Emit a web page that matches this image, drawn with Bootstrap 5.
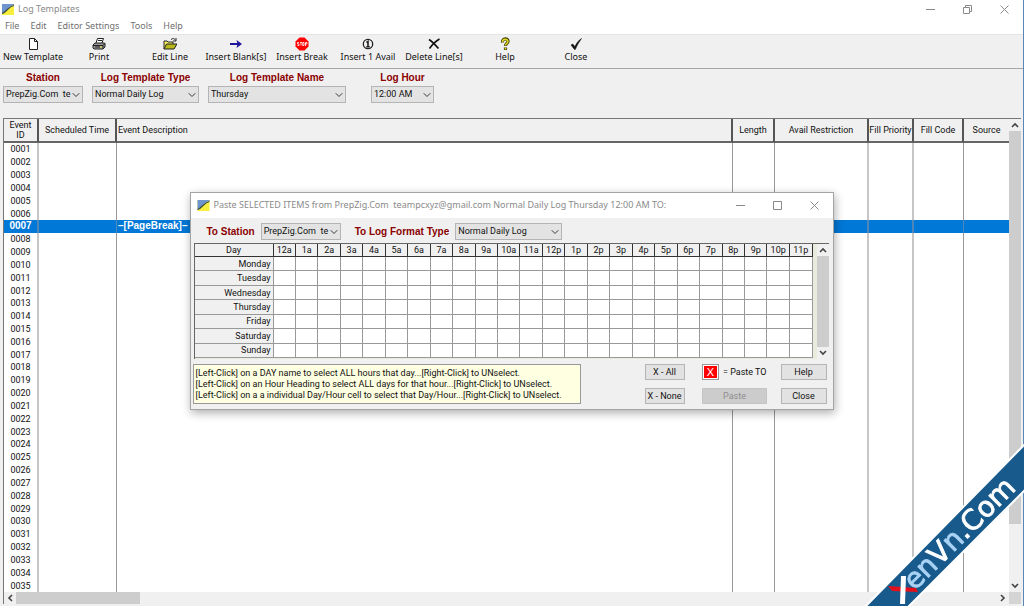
<!DOCTYPE html>
<html lang="en">
<head>
<meta charset="utf-8">
<meta name="viewport" content="width=device-width, initial-scale=1">
<title>Log Templates</title>
<link href="https://cdn.jsdelivr.net/npm/bootstrap@5.3.0/dist/css/bootstrap.min.css" rel="stylesheet">
<style>
  :root { --ui: "Noto Sans", "Open Sans", sans-serif; --cell: Roboto, "Liberation Sans", sans-serif; --face: #f0f0f0; --thumb: #cdcdcd; }
  body { font-family: var(--cell); font-size: 9px; line-height: 12px; color: #111; background: #fff; overflow: hidden; }
  button { font-family: inherit; }
  .app { height: 100vh; border-right: 1px solid #5b86b8; background: var(--face); }
  .titlebar { height: 18px; padding-left: 2px; gap: 4px; font: 9px/18px var(--ui); color: #8a8a8a; background: #fff; white-space: nowrap; }
  .appicon { flex: none; }
  .winbtn { flex: none; border: 0; background: none; padding: 0; width: 37px; display: flex; justify-content: center; align-items: center; color: #8a8a8a; }
  .menubar { height: 16px; font: 9px/16px var(--ui); background: #fff; padding-left: 5px; gap: 11px; }
  .menubar a { color: #707070; text-decoration: none; }
  .toolbar { height: 35px; gap: 5px; border-top: 1px solid #e4e4e4; border-bottom: 1px solid #a6a6a6; }
  .tool { width: 66px; border: 0; padding: 2px 0 0; background: none; font: 9px/12px var(--ui); color: #111; white-space: nowrap; display: flex; flex-direction: column; align-items: center; }
  .tool svg { width: 14px; height: 14px; flex: none; }
  .filters { height: 49px; padding: 3px; gap: 9px; }
  .caption { font: bold 10px/12px "Liberation Sans", sans-serif; color: #8b0000; white-space: nowrap; }
  .filters .caption { display: block; text-align: center; margin-bottom: 2px; }
  .combo { height: 17px; padding: 0 10px 0 2px; border: 1px solid #b4b4b4; border-radius: 0; background-color: #e3e3e3; background-position: right 2px center; background-size: 8px 8px; font: 9px/15px var(--cell); color: #111; min-height: 0; }
  .w-station { width: 80px; } .w-type { width: 107px; } .w-name { width: 138px; } .w-hour { width: 63px; }
  .w-hour-wrap { margin-left: 16px; }
  .log { border-left: 1px solid #777; border-top: 1px solid #777; margin: 0 2px 2px 3px; min-height: 0; }
  .log-main { min-width: 0; min-height: 0; background: #fff; }
  .log-rows { min-height: 0; }
  .events { width: 100%; height: 100%; table-layout: fixed; border-collapse: separate; border-spacing: 0; text-align: center; }
  .events th { height: 24px; font-weight: normal; line-height: 10px; padding: 0; background: var(--face); border-bottom: 2px solid #666; border-right: 2px solid #555; white-space: nowrap; }
  .events td { padding: 0; line-height: 12px; border-right: 1px solid #999; }
  .events td.wide { border-right: 2px solid #c6c6c6; }
  .events th:last-child, .events td:last-child { border-right: 0; }
  .events th.desc, .events td.desc { text-align: left; padding-left: 1px; }
  .events tr.picked td { background: #0078d7; color: #fff; font: bold 10px/12px "Liberation Sans", sans-serif; border-right-color: #4f86b8; }
  .vbar { width: 12px; background: var(--face); }
  .hbar { height: 12px; background: var(--face); }
  .thumb { background: var(--thumb); }
  .arrow { width: 12px; height: 12px; border: 0; padding: 0; background: none; color: #444; display: flex; align-items: center; justify-content: center; flex: none; }
  .hbar.corner { width: 12px; background: #d4d4d4; }
  .paste-win { width: 644px; top: 192px; left: 0; right: 0; margin: 0 auto; background: var(--face); border: 1px solid #a4a4a4; box-shadow: 1px 3px 9px rgba(0,0,0,.32); }
  .paste-win .titlebar { height: 25px; line-height: 24px; padding-left: 6px; }
  .targets { padding: 4px 0 2px 16px; height: 25px; gap: 6px; }
  .grid-area { height: 116px; margin: 0 4px 0 3px; border-top: 1px solid #666; border-left: 1px solid #666; background: #e9ebdc; }
  .hours { table-layout: fixed; width: 100%; height: 114px; border-collapse: separate; border-spacing: 0; background: #fff; text-align: center; }
  .hours th { font-weight: normal; padding: 0; line-height: 12px; background: var(--face); }
  .hours thead th { height: 13px; border-right: 1px solid #333; border-bottom: 1px solid #333; }
  .hours tbody th { text-align: right; padding-right: 2px; }
  .hours tbody th, .hours td { border-right: 1px solid #999; border-bottom: 1px solid #999; }
  .hint { width: 388px; height: 40px; padding: 3px 2px; line-height: 11px; background: #ffffe1; border: 1px solid #999; white-space: nowrap; }
  .dlg-foot { padding: 5px 6px 5px 2px; }
  .actions { width: 182px; }
  .push { border: 1px solid #b5b5b5; background: #e2e2e2; border-radius: 0; padding: 0; height: 16px; font: 9px/14px var(--cell); color: #111; white-space: nowrap; }
  .push:disabled { background: #cccccc; border-color: #c4c4c4; color: #8f8f8f; opacity: 1; }
  .w-mark { width: 40px; } .w-paste { width: 65px; } .w-end { width: 46px; }
  .key { width: 17px; height: 16px; background: #f00; color: #fff; border: 1px solid #999; outline: 1px solid #fff; outline-offset: -2px; font: 11px/14px "Liberation Sans", sans-serif; text-align: center; }
  .ribbon { right: 0; bottom: 0; width: 160px; height: 162px; pointer-events: none; }
</style>
</head>
<body>
<div class="app d-flex flex-column position-relative">
  <header class="titlebar d-flex">
    <svg class="appicon mt-1" width="12" height="11" viewBox="0 0 12 11"><rect width="12" height="11" fill="#f7ee3e"/><path d="M0 0h12v1C7 2 6 6 0 10z" fill="#6f95cf"/><path d="M0 9.500C5 8 6 2.500 12 1.500" fill="none" stroke="#3c4a3c" stroke-width="1.200"/></svg>
    <span class="flex-grow-1">Log Templates</span>
    <div class="d-flex">
      <button class="winbtn" aria-label="Minimize"><svg width="9" height="9"><path d="M0 4.500h9" stroke="currentColor"/></svg></button>
      <button class="winbtn" aria-label="Restore"><svg width="9" height="9" fill="none" stroke="currentColor"><path d="M.5 2.500h6v6h-6zM2.500 2.500v-2h6v6h-2"/></svg></button>
      <button class="winbtn" aria-label="Close"><svg width="9" height="9" stroke="currentColor"><path d="M.5.500l8 8M8.500.500l-8 8"/></svg></button>
    </div>
  </header>
  <nav class="menubar d-flex">
    <a href="#">File</a><a href="#">Edit</a><a href="#">Editor Settings</a><a href="#">Tools</a><a href="#">Help</a>
  </nav>
  <div class="toolbar d-flex">
    <div class="d-flex">
      <button class="tool"><svg viewBox="0 0 14 14"><path d="M3.500 1.500h5l3 3v8h-8zM8.500 1.500v3h3" fill="#fff" stroke="#222"/></svg>New Template</button>
      <button class="tool"><svg viewBox="0 0 14 14"><path d="M4 6l1.500-4.500h6L10 6" fill="#fff" stroke="#222"/><path d="M6 3.500h4" stroke="#222"/><path d="M1 8l2-2h9.500l.5 1v3l-2 2H2l-1-1z" fill="#999" stroke="#222"/><path d="M1 8.500h10v3M11 8.500l2-2M3 10h5" fill="none" stroke="#222"/><path d="M8 10h2" stroke="#f4e842"/></svg>Print</button>
    </div>
    <div class="d-flex">
      <button class="tool"><svg viewBox="0 0 14 14"><path d="M1 12V4h3l1 1h5v2" fill="#f8f06a" stroke="#222"/><path d="M1 12l2.500-5H14l-3 5z" fill="#b9b91c" stroke="#222"/><path d="M8 2.500c2-1.500 3-1 4.500.5M13 1v3h-3" fill="none" stroke="#222"/></svg>Edit Line</button>
      <button class="tool"><svg viewBox="0 0 14 14"><path d="M1 7h8" stroke="#1f169c" stroke-width="2"/><path d="M7.500 3l5.500 4-5.500 4 1-4z" fill="#1f169c"/></svg>Insert Blank[s]</button>
      <button class="tool"><svg viewBox="0 0 14 14"><path d="M4.500.500h5l4 4v5l-4 4h-5l-4-4v-5z" fill="#f00"/><path d="M4 5.500H2.500V7H4v1.500H2.500M5 5.500h2M6 5.500v3M7.700 5.500h1.300v3H7.700zM10.500 9V5.500H12V7h-1.500" fill="none" stroke="#fff" stroke-width=".8"/></svg>Insert Break</button>
      <button class="tool"><svg viewBox="0 0 14 14"><circle cx="7" cy="7" r="4.700" fill="#f0f0f0" stroke="#222" stroke-width="1.300"/><path d="M5.500 5.500L7 4.500V10M5.300 9.800h3.400" fill="none" stroke="#222" stroke-width="1.600"/></svg>Insert 1 Avail</button>
      <button class="tool"><svg viewBox="0 0 14 14"><path d="M2 2.500c3 2 6 5 9.500 9M12.500 2C8 4.500 5 8 2.500 11.500" fill="none" stroke="#111" stroke-width="1.600"/></svg>Delete Line[s]</button>
    </div>
    <button class="tool"><svg viewBox="0 0 14 14"><path d="M4.500 5.500C4 .500 10.500 1 10 4.500 9.800 6.500 7.500 6.500 7.500 9M7.500 10.500V13" fill="none" stroke="#444208" stroke-width="3.200"/><path d="M4.500 5C4.500 1.500 10 1.500 9.900 4.500 9.800 6.500 7.500 6.500 7.500 8.500M7.500 11v1.500" fill="none" stroke="#e4dd1f" stroke-width="1.500"/></svg>Help</button>
    <button class="tool"><svg viewBox="0 0 14 14"><path d="M2 8l1.700-1L6 9.500C7.500 6 9.500 3.500 12.500 1.500 10 5 8 8.500 6.300 12.500H5.500z" fill="#111" stroke="#111" stroke-width=".5"/></svg>Close</button>
  </div>
  <form class="filters d-flex">
    <div><label class="caption" for="station">Station</label><select id="station" class="form-select combo w-station"><option>PrepZig.Com&nbsp; te</option></select></div>
    <div><label class="caption" for="type">Log Template Type</label><select id="type" class="form-select combo w-type"><option>Normal Daily Log</option></select></div>
    <div><label class="caption" for="tname">Log Template Name</label><select id="tname" class="form-select combo w-name"><option>Thursday</option></select></div>
    <div class="w-hour-wrap"><label class="caption" for="hour">Log Hour</label><select id="hour" class="form-select combo w-hour"><option>12:00 AM</option></select></div>
  </form>
  <main class="log d-flex flex-grow-1">
    <div class="log-main d-flex flex-column flex-grow-1">
      <div class="log-rows flex-grow-1">
        <table class="events">
          <colgroup><col style="width:35px"><col style="width:78px"><col><col style="width:42px"><col style="width:94px"><col style="width:45px"><col style="width:50px"><col style="width:45px"></colgroup>
          <thead><tr><th>Event<br>ID</th><th>Scheduled Time</th><th class="desc">Event Description</th><th>Length</th><th>Avail Restriction</th><th>Fill Priority</th><th>Fill Code</th><th>Source</th></tr></thead>
          <tbody id="events"></tbody>
        </table>
      </div>
      <div class="hbar d-flex">
        <button class="arrow" aria-label="Scroll left"><svg width="6" height="8" fill="none" stroke="currentColor" stroke-width="1.600"><path d="M5 1L2 4l3 3"/></svg></button>
        <div class="thumb" style="width:124px"></div>
        <button class="arrow ms-auto" aria-label="Scroll right"><svg width="6" height="8" fill="none" stroke="currentColor" stroke-width="1.600"><path d="M1 1l3 3-3 3"/></svg></button>
      </div>
    </div>
    <div class="vbar d-flex flex-column">
      <button class="arrow" aria-label="Scroll up"><svg width="8" height="6" fill="none" stroke="currentColor" stroke-width="1.600"><path d="M1 5l3-3 3 3"/></svg></button>
      <div class="thumb" style="height:81%"></div>
      <button class="arrow mt-auto" aria-label="Scroll down"><svg width="8" height="6" fill="none" stroke="currentColor" stroke-width="1.600"><path d="M1 1l3 3 3-3"/></svg></button>
      <div class="hbar corner"></div>
    </div>
  </main>

  <section class="paste-win position-absolute" role="dialog" aria-labelledby="paste-title">
    <div class="titlebar d-flex">
      <svg class="appicon my-auto" width="13" height="11" viewBox="0 0 12 11"><rect width="12" height="11" fill="#f7ee3e"/><path d="M0 0h12v1C7 2 6 6 0 10z" fill="#6f95cf"/><path d="M0 9.500C5 8 6 2.500 12 1.500" fill="none" stroke="#3c4a3c" stroke-width="1.200"/></svg>
      <span id="paste-title" class="flex-grow-1">Paste SELECTED ITEMS from PrepZig.Com&nbsp; teampcxyz@gmail.com Normal Daily Log Thursday 12:00 AM TO:</span>
      <div class="d-flex">
        <button class="winbtn" aria-label="Minimize"><svg width="9" height="9"><path d="M0 4.500h9" stroke="currentColor"/></svg></button>
        <button class="winbtn" aria-label="Maximize"><svg width="9" height="9" fill="none" stroke="currentColor"><path d="M.5.500h8v8h-8z"/></svg></button>
        <button class="winbtn" aria-label="Close window"><svg width="9" height="9" stroke="currentColor"><path d="M.5.500l8 8M8.500.500l-8 8"/></svg></button>
      </div>
    </div>
    <div class="targets d-flex align-items-center">
      <label class="caption" for="to-station">To Station</label><select id="to-station" class="form-select combo w-station"><option>PrepZig.Com&nbsp; te</option></select>
      <label class="caption ms-2" for="to-type">To Log Format Type</label><select id="to-type" class="form-select combo w-type"><option>Normal Daily Log</option></select>
    </div>
    <div class="grid-area d-flex">
      <div class="flex-grow-1">
        <table class="hours">
          <thead><tr id="hours-head"><th style="width:79px">Day</th></tr></thead>
          <tbody id="hours-body"></tbody>
        </table>
      </div>
      <div class="vbar d-flex flex-column ms-1">
        <button class="arrow" aria-label="Grid up"><svg width="8" height="6" fill="none" stroke="currentColor" stroke-width="1.600"><path d="M1 5l3-3 3 3"/></svg></button>
        <div class="thumb flex-grow-1"></div>
        <button class="arrow" aria-label="Grid down"><svg width="8" height="6" fill="none" stroke="currentColor" stroke-width="1.600"><path d="M1 1l3 3 3-3"/></svg></button>
      </div>
    </div>
    <div class="dlg-foot d-flex justify-content-between">
      <div class="hint">[Left-Click] on a DAY name to select ALL hours that day...[Right-Click] to UNselect.<br>[Left-Click] on an Hour Heading to select ALL days for that hour...[Right-Click] to UNselect.<br>[Left-Click] on a a individual Day/Hour cell to select that Day/Hour...[Right-Click] to UNselect.</div>
      <div class="actions d-flex justify-content-between">
        <div class="d-flex flex-column justify-content-between"><button class="push w-mark">X - All</button><button class="push w-mark">X - None</button></div>
        <div class="d-flex flex-column justify-content-between ms-1"><div class="d-flex gap-1"><span class="key">X</span><span class="my-auto">= Paste TO</span></div><button class="push w-paste" disabled>Paste</button></div>
        <div class="d-flex flex-column justify-content-between"><button class="push w-end">Help</button><button class="push w-end">Close</button></div>
      </div>
    </div>
  </section>
</div>

<svg class="ribbon position-fixed" viewBox="0 0 160 162">
  <path d="M2 162L160 1v47L45 162z" fill="#185a8c"/>
  <path d="M1 163L161 0M44 163L161 46" stroke="#fff" stroke-width="2" fill="none"/>
  <g transform="translate(38 160) rotate(-45)">
    <text font-family="DejaVu Sans, sans-serif" font-size="28" fill="#fff" stroke="#fff" stroke-width=".8"><tspan fill="#185a8c" stroke="none">X</tspan><tspan fill="#a9d2f5" stroke="#a9d2f5">en</tspan>V<tspan fill="#a9d2f5" stroke="#a9d2f5">n</tspan>.Com</text>
  </g>
  <path d="M24 142l28 2 2 4-26-1z" fill="#e3101b"/>
  <path d="M37 132h5l-1 28h-5z" fill="#fff"/>
</svg>

<script src="https://cdn.jsdelivr.net/npm/bootstrap@5.3.0/dist/js/bootstrap.bundle.min.js"></script>
<script>
  // Event rows 0001-0035, with the page break selected
  const selected = 7;
  document.getElementById('events').innerHTML = Array.from({ length: 35 }, (_, i) => {
    const n = i + 1, hit = n === selected;
    return `<tr class="${hit ? 'picked' : ''}"><td class="wide">${String(n).padStart(4, '0')}</td><td></td><td class="desc">${hit ? '–[PageBreak]–' : ''}</td><td></td><td class="wide"></td><td class="wide"></td><td></td><td></td></tr>`;
  }).join('');
  // Day / hour grid
  const hours = ['a', 'p'].flatMap(s => [12, 1, 2, 3, 4, 5, 6, 7, 8, 9, 10, 11].map(h => h + s));
  document.getElementById('hours-head').insertAdjacentHTML('beforeend', hours.map(h => `<th>${h}</th>`).join(''));
  document.getElementById('hours-body').innerHTML = ['Monday', 'Tuesday', 'Wednesday', 'Thursday', 'Friday', 'Saturday', 'Sunday']
    .map(d => `<tr><th>${d}</th>${'<td></td>'.repeat(24)}</tr>`).join('');
</script>
</body>
</html>
